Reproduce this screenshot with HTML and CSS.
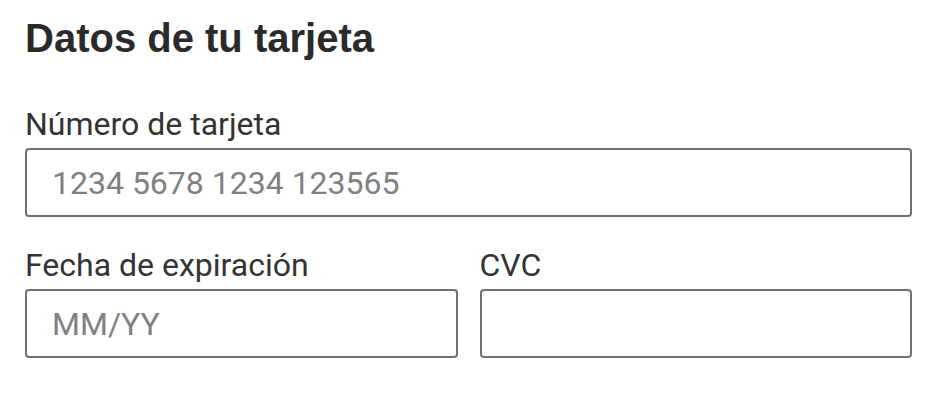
FILE: index.html
```html
<!DOCTYPE html>
<html>

<head>
    <title>Datos de tu tarjeta</title>
    <link rel="stylesheet" href="styles.css">
</head>

<body>
    <form class="card-form">
        <h2 class="card-title">Datos de tu tarjeta</h2>

        <div class="field">
            <label for="cardNumber">Número de tarjeta</label>
            <input type="text" id="cardNumber" name="cardNumber" placeholder="1234 5678 1234 123565">
        </div>

        <div class="field-row">
            <div class="field">
                <label for="expiry">Fecha de expiración</label>
                <input type="text" id="expiry" name="expiry" placeholder="MM/YY">
            </div>
            <div class="field">
                <label for="cvc">CVC</label>
                <input type="text" id="cvc" name="cvc">
            </div>
        </div>
    </form>
</body>

</html>
```

FILE: styles.css
```css
body {
    margin: 0;
    font-family: Roboto, "Liberation Sans", sans-serif;
    background-color: #ffffff;
    color: #2b2b2b;
}

.card-form {
    padding: 14px 14px 0 25px;
}

.card-title {
    margin: 0 0 43px 0;
    font-family: "Liberation Sans", Arial, sans-serif;
    font-size: 40px;
    font-weight: bold;
    line-height: 48px;
    color: #2a2a2a;
}

.field {
    display: flex;
    flex-direction: column;
    min-width: 0;
    margin-bottom: 29px;
}

.field label {
    font-size: 32px;
    line-height: 38px;
    margin-bottom: 5px;
    color: #333333;
}

.field input {
    width: 100%;
    height: 69px;
    box-sizing: border-box;
    border: 2px solid #69717b;
    border-radius: 4px;
    padding: 0 25px;
    font-family: Roboto, "Liberation Sans", sans-serif;
    font-size: 32px;
    color: #333;
}

.field input::placeholder {
    color: #808080;
}

.field-row {
    display: flex;
    gap: 22px;
}

.field-row .field {
    flex: 1;
}
```
